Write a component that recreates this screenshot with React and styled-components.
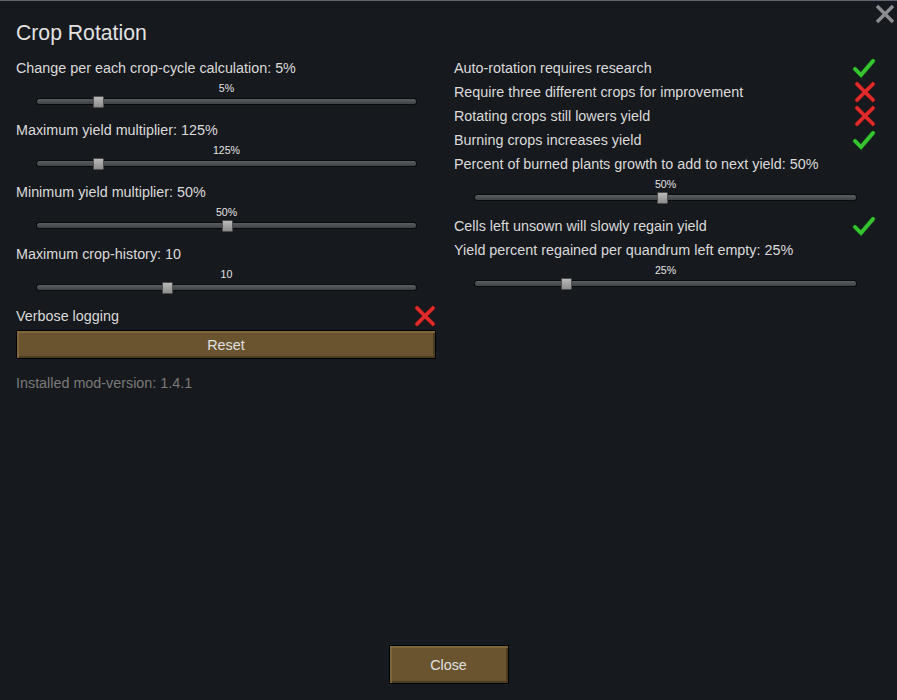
import React from "react";
import styled, { createGlobalStyle } from "styled-components";

const Global = createGlobalStyle`
  html, body { margin: 0; padding: 0; background: #16191e; }
  body { font-family: "Liberation Sans", Arial, sans-serif; color: #dadada; }
  * { box-sizing: border-box; }
`;

const Window = styled.div`
  width: 897px;
  height: 700px;
  background: #16191e;
  border-top: 1px solid #5f666f;
  display: flex;
  flex-direction: column;
  padding: 17px 21px 16px 16px;
  position: relative;
`;

const CloseX = styled.button`
  position: absolute;
  top: 3px;
  right: 2px;
  width: 20px;
  height: 20px;
  padding: 0;
  border: 0;
  background: none;
  display: flex;
`;

const Title = styled.h1`
  margin: 0;
  height: 30px;
  line-height: 30px;
  font-size: 21.2px;
  font-weight: normal;
  color: #e2e2e2;
`;

const Columns = styled.div`
  margin-top: 8px;
  display: grid;
  grid-template-columns: 420px 422px;
  column-gap: 18px;
  align-items: start;
  flex: 1;
`;

const Column = styled.div`
  display: flex;
  flex-direction: column;
`;

const Row = styled.div`
  height: 24px;
  display: flex;
  align-items: center;
  justify-content: space-between;
  font-size: 14.35px;
  white-space: nowrap;
  color: ${(p) => (p.$muted ? "#7a7a7a" : "#dadada")};
  margin-top: ${(p) => p.$mt || 0}px;
`;

const SliderWrap = styled.div`
  height: 38px;
  padding: 0 20px 0 21px;
`;

const SliderValue = styled.div`
  height: 16px;
  line-height: 16px;
  text-align: center;
  font-size: 10.6px;
  color: #e4e4e4;
`;

const Track = styled.div`
  position: relative;
  margin-top: 3px;
  height: 5px;
  border-radius: 3px;
  background: linear-gradient(#5a5d61, #3e4145);
  box-shadow: 0 0 0 1px #0a0b0d;
`;

const Thumb = styled.div`
  position: absolute;
  top: 50%;
  width: 11px;
  height: 12px;
  margin-left: -5px;
  transform: translateY(-50%);
  border: 1px solid #4e4e4e;
  border-radius: 1px;
  background: linear-gradient(#b9b9b9, #8c8c8c);
`;

const Button = styled.button`
  display: block;
  width: ${(p) => p.$w || "100%"};
  height: ${(p) => p.$h}px;
  margin-top: ${(p) => p.$mt || 0}px;
  background: #6a532f;
  border: 1px solid #000;
  box-shadow: inset 2px 2px 0 #7e663a, inset -2px -2px 0 #4c3b1f;
  color: #e0e0e0;
  font-family: "Liberation Sans", Arial, sans-serif;
  font-size: 14.35px;
  padding: 0;
`;

const Footer = styled.div`
  display: flex;
  justify-content: center;
  padding-left: 5px;
`;

const Check = () => (
  <svg width="24" height="22" viewBox="0 0 24 22">
    <path d="M3 12 L9 18 L21 4" fill="none" stroke="#0f5a0f" strokeWidth="5.2" strokeLinecap="round" strokeLinejoin="miter" opacity="0.5" />
    <path d="M3 12 L9 18 L21 4" fill="none" stroke="#36c530" strokeWidth="3.8" strokeLinecap="round" strokeLinejoin="miter" />
  </svg>
);

const Cross = () => (
  <svg width="22" height="22" viewBox="0 0 22 22">
    <path d="M3 3 L19 19 M19 3 L3 19" fill="none" stroke="#6a1010" strokeWidth="5" strokeLinecap="round" opacity="0.5" />
    <path d="M3 3 L19 19 M19 3 L3 19" fill="none" stroke="#e12a2a" strokeWidth="3.6" strokeLinecap="round" />
  </svg>
);

const Slider = ({ value, frac }) => (
  <SliderWrap>
    <SliderValue>{value}</SliderValue>
    <Track>
      <Thumb style={{ left: `${frac * 100}%` }} />
    </Track>
  </SliderWrap>
);

export default function App() {
  return (
    <>
      <Global />
      <Window>
        <CloseX aria-label="close">
          <svg width="20" height="20" viewBox="0 0 20 20">
            <path d="M2 2 L18 18 M18 2 L2 18" stroke="#8b8d90" strokeWidth="3.4" />
          </svg>
        </CloseX>
        <Title>Crop Rotation</Title>
        <Columns>
          <Column>
            <Row>Change per each crop-cycle calculation: 5%</Row>
            <Slider value="5%" frac={0.161} />
            <Row>Maximum yield multiplier: 125%</Row>
            <Slider value="125%" frac={0.161} />
            <Row>Minimum yield multiplier: 50%</Row>
            <Slider value="50%" frac={0.5} />
            <Row>Maximum crop-history: 10</Row>
            <Slider value="10" frac={0.344} />
            <Row>
              Verbose logging
              <Cross />
            </Row>
            <Button $h={29} $mt={2}>Reset</Button>
            <Row $muted $mt={12}>Installed mod-version: 1.4.1</Row>
          </Column>
          <Column>
            <Row>
              Auto-rotation requires research
              <Check />
            </Row>
            <Row>
              Require three different crops for improvement
              <Cross />
            </Row>
            <Row>
              Rotating crops still lowers yield
              <Cross />
            </Row>
            <Row>
              Burning crops increases yield
              <Check />
            </Row>
            <Row>Percent of burned plants growth to add to next yield: 50%</Row>
            <Slider value="50%" frac={0.49} />
            <Row>
              Cells left unsown will slowly regain yield
              <Check />
            </Row>
            <Row>Yield percent regained per quandrum left empty: 25%</Row>
            <Slider value="25%" frac={0.24} />
          </Column>
        </Columns>
        <Footer>
          <Button $w="120px" $h={39}>Close</Button>
        </Footer>
      </Window>
    </>
  );
}
